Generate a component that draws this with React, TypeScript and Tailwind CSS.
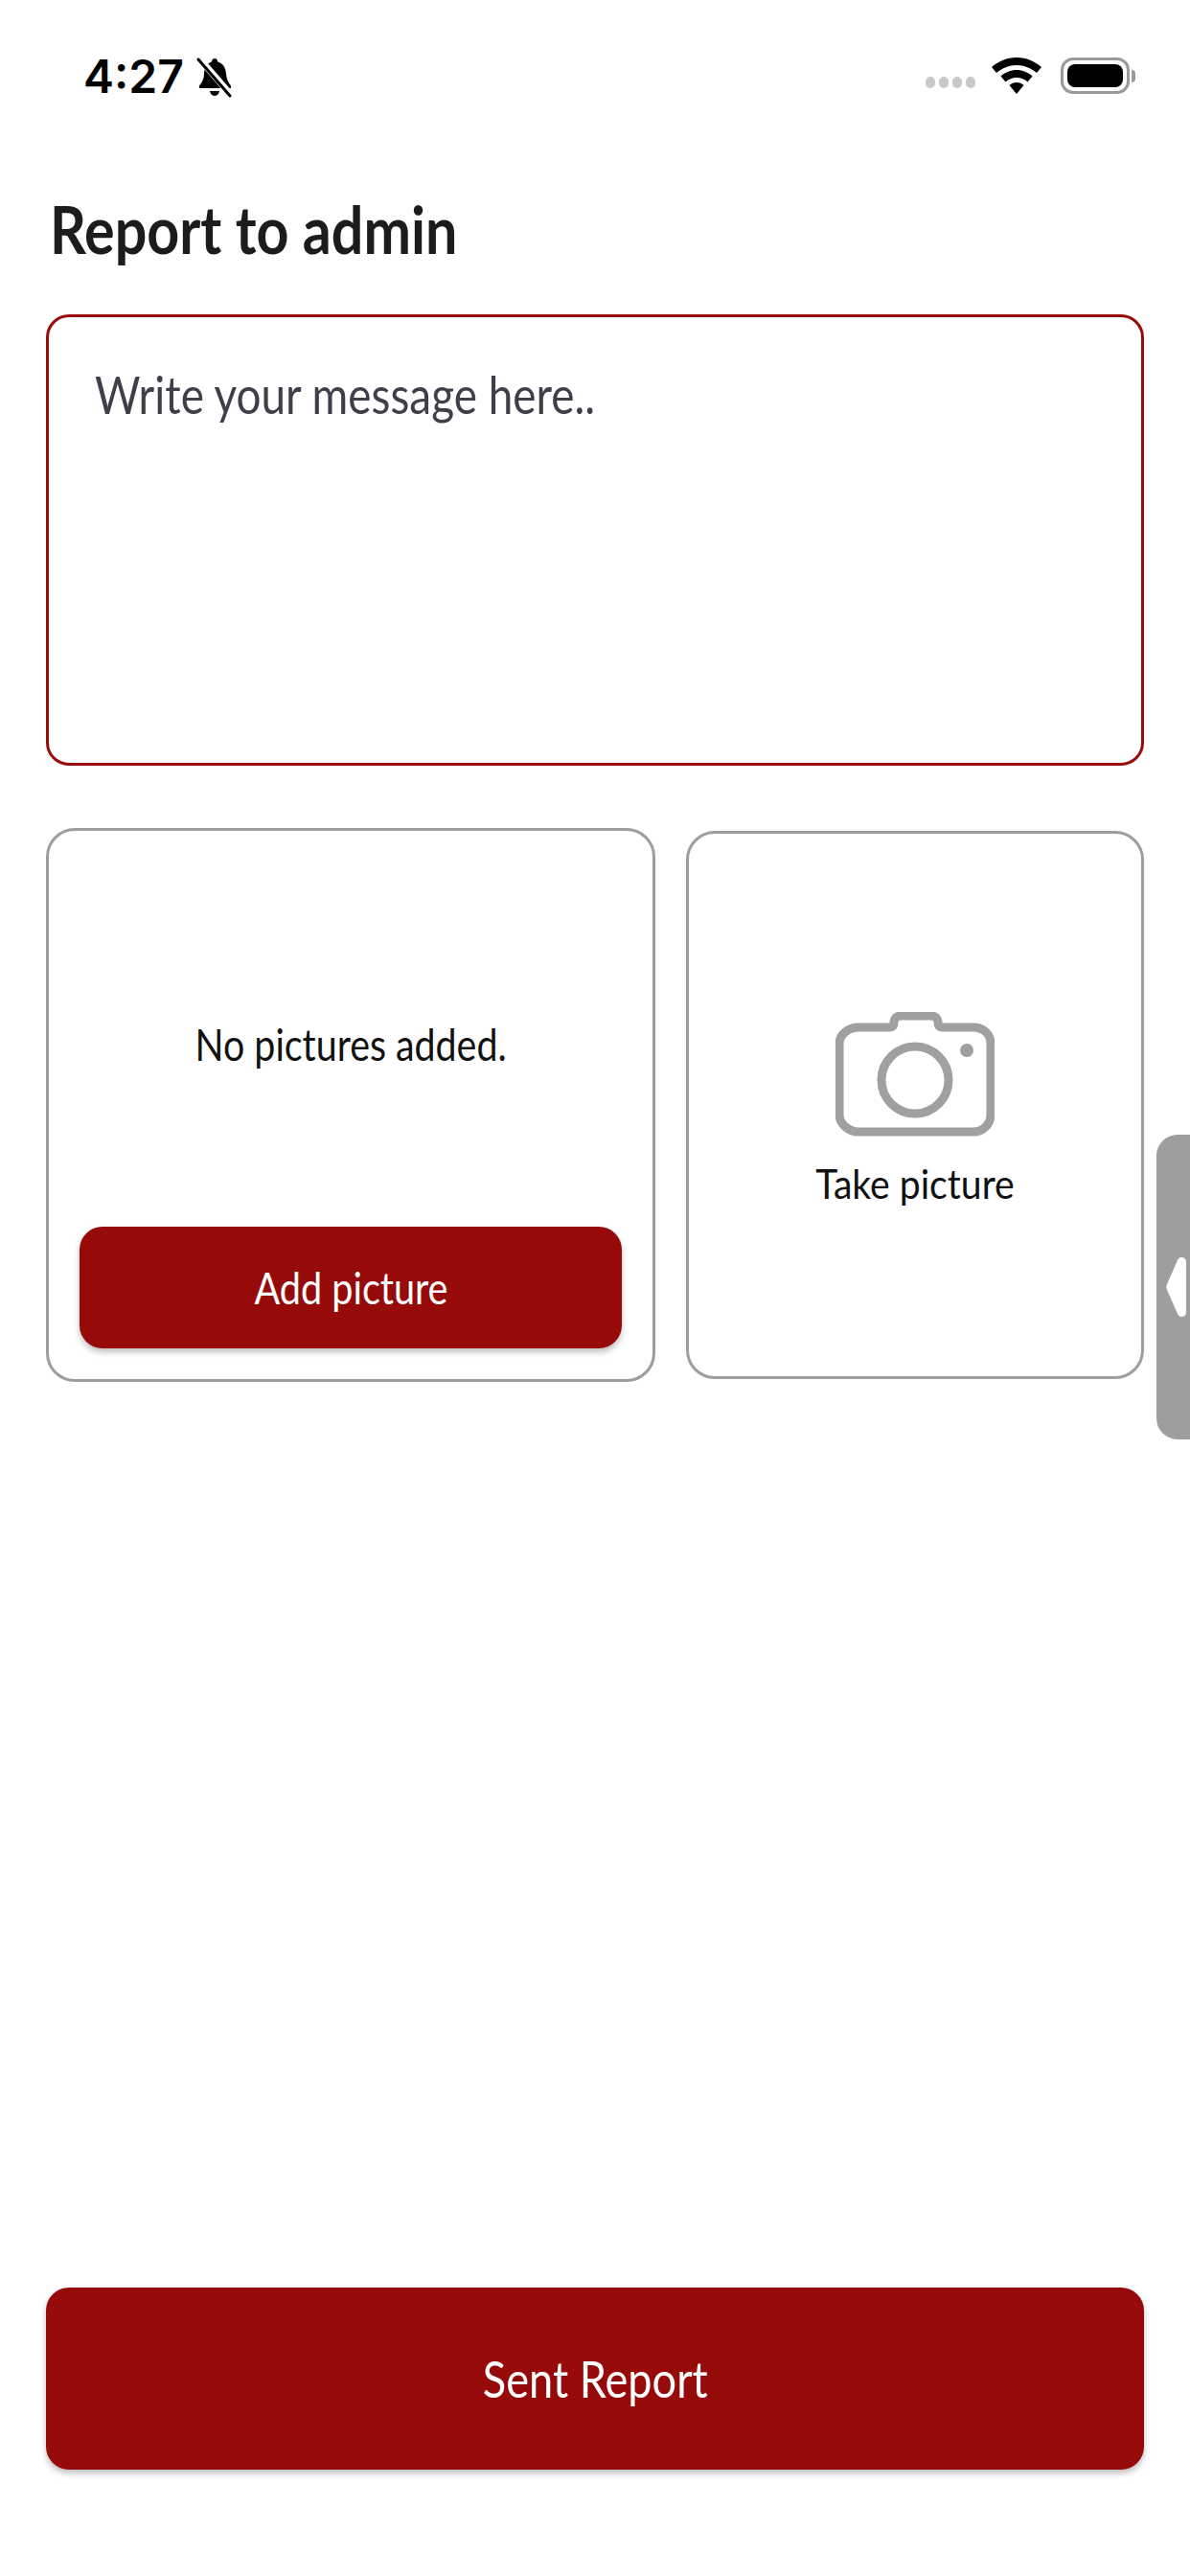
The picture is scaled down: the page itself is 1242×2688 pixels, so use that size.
const bodyFont = "font-['Lato','Open_Sans',sans-serif]";

function MutedBell() {
  return (
    <svg width="42" height="44" viewBox="0 0 42 44" fill="none">
      <path d="M21 3c2 0 3 1.500 3.200 3.500C30 8 32.500 13 33 19c.4 5 2 9 5 12.500V34H5v-2.500C8 28 10 24 10 19c.3-6 3-11 8-12.500C18 4.500 19 3 21 3z" fill="#000" />
      <path d="M16 37h10c-.5 3-2.500 5-5 5s-4.500-2-5-5z" fill="#000" />
      <path d="M5 3l33 38" stroke="#fff" strokeWidth="7" />
      <path d="M4 4l33 38" stroke="#000" strokeWidth="3" strokeLinecap="round" />
    </svg>
  );
}

function WifiIcon() {
  return (
    <svg width="52" height="38" viewBox="0 0 52 38" fill="#000">
      <path d="M26 0c10 0 19 4 26 10l-5 6c-6-5-13-8-21-8S11 11 5 16l-5-6C7 4 16 0 26 0z" />
      <path d="M26 13c6 0 12 2.500 16.500 6.500l-5 6C34.500 22.500 30.500 21 26 21s-8.500 1.500-11.500 4.500l-5-6C14 15.500 20 13 26 13z" />
      <path d="M26 26c3 0 5.500 1 7.500 3L26 38l-7.500-9c2-2 4.500-3 7.500-3z" />
    </svg>
  );
}

function StatusBar() {
  return (
    <div className="h-[197px] flex items-start justify-between pl-[87px] pr-[57px] pt-[54px]">
      <div className="flex items-center gap-[11px]">
        <span className="font-['Inter',sans-serif] font-semibold text-[48px] leading-[52px] text-black">4:27</span>
        <MutedBell />
      </div>
      <div className="flex items-center pt-[6px]">
        <div className="flex gap-[4px] mt-[14px] mr-[17px]">
          <span className="w-[10px] h-[12px] rounded-full bg-[#c8c8c8]" />
          <span className="w-[10px] h-[12px] rounded-full bg-[#c8c8c8]" />
          <span className="w-[10px] h-[12px] rounded-full bg-[#c8c8c8]" />
          <span className="w-[10px] h-[12px] rounded-full bg-[#c8c8c8]" />
        </div>
        <WifiIcon />
        <div className="ml-[20px] w-[72px] h-[38px] rounded-[13px] border-[3px] border-[#9a9a9a] p-[4px]">
          <div className="w-full h-full rounded-[8px] bg-black" />
        </div>
        <span className="w-[4px] h-[13px] rounded-r-full bg-[#9a9a9a] ml-[2px]" />
      </div>
    </div>
  );
}

function CameraIcon() {
  return (
    <svg width="166" height="130" viewBox="0 0 166 130" fill="none" stroke="#a0a0a0" strokeWidth="9">
      <path d="M24 16h32c4 0 5-2 5-5 0-4 3-7 7-7h32c4 0 7 3 7 7 0 3 1 5 5 5h32c10 0 18 7 18 17v74c0 10-8 18-18 18H24c-10 0-20-8-20-18V33c0-10 10-17 20-17z" />
      <circle cx="83" cy="71" r="35" />
      <circle cx="137" cy="40" r="7" fill="#a0a0a0" stroke="none" />
    </svg>
  );
}

export default function App() {
  return (
    <div className={`relative w-[1242px] h-[2688px] bg-white flex flex-col overflow-hidden ${bodyFont}`}>
      <StatusBar />

      <h1 className="ml-[52px] text-[68px] leading-[84px] font-bold text-[#1c1c1e] scale-x-[0.87] origin-left whitespace-nowrap">Report to admin</h1>

      <div className="mx-[48px] mt-[47px] h-[471px] rounded-[24px] border-[3px] border-[#9a0b0b] pl-[48px] pt-[48px]">
        <p className="text-[54px] leading-[66px] text-[#3f3f4a] scale-x-[0.85] origin-left whitespace-nowrap">Write your message here..</p>
      </div>

      <div className="mx-[48px] mt-[65px] flex items-center justify-between">
        <div className="w-[636px] h-[578px] rounded-[30px] border-[3px] border-[#9e9e9e] px-[32px] pb-[32px] flex flex-col">
          <div className="flex-1 flex items-center justify-center pt-[32px]">
            <span className="inline-block text-[46px] leading-[56px] text-[#111] scale-x-[0.855] whitespace-nowrap">No pictures added.</span>
          </div>
          <button className="h-[127px] rounded-[24px] bg-[#970a0a] text-white shadow-[0_4px_6px_rgba(0,0,0,0.25)]">
            <span className="inline-block text-[46px] scale-x-[0.86] whitespace-nowrap">Add picture</span>
          </button>
        </div>

        <div className="w-[478px] h-[572px] rounded-[30px] border-[3px] border-[#9e9e9e] flex flex-col items-center pt-[186px]">
          <CameraIcon />
          <span className="inline-block mt-[24px] text-[43px] leading-[50px] text-[#111] scale-x-[0.91] whitespace-nowrap">Take picture</span>
        </div>
      </div>

      <div className="flex-1" />

      <button className="mx-[48px] mb-[111px] h-[190px] rounded-[24px] bg-[#970a0a] text-white shadow-[0_4px_6px_rgba(0,0,0,0.25)]">
        <span className="inline-block text-[52px] scale-x-[0.868] whitespace-nowrap">Sent Report</span>
      </button>

      {/* side handle */}
      <div className="absolute right-0 top-[1184px] w-[35px] h-[318px] rounded-l-[22px] bg-[#9e9e9e] flex items-center justify-center">
        <svg width="24" height="68" viewBox="0 0 24 68" className="ml-[6px]">
          <path d="M17 3c3 0 5 2 5 5v52c0 3-2 5-5 5-2 0-3-1-4-3L2 37c-1-2-1-4 0-6L13 6c1-2 2-3 4-3z" fill="#fff" />
        </svg>
      </div>
    </div>
  );
}
